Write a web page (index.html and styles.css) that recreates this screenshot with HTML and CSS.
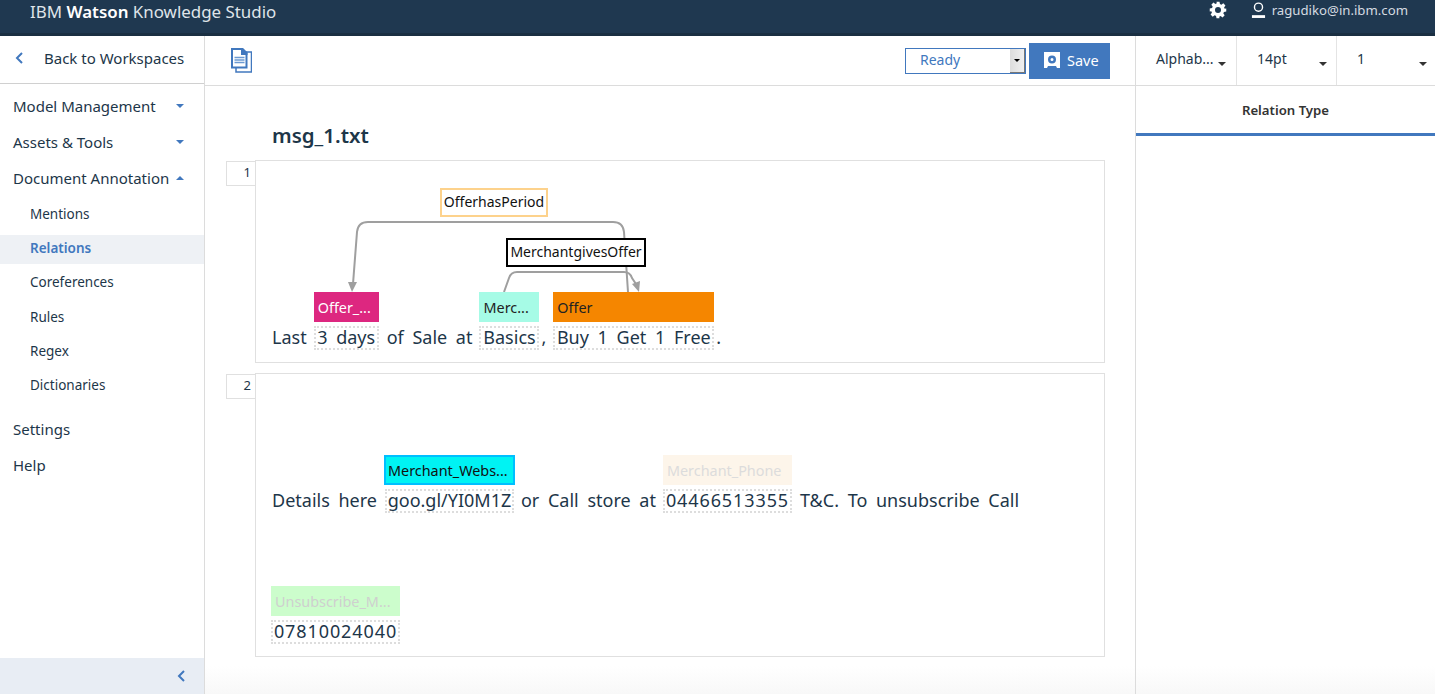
FILE: index.html
```html
<!DOCTYPE html>
<html lang="en">
<head>
  <meta charset="UTF-8" />
  <title>IBM Watson Knowledge Studio</title>
  <link rel="stylesheet" href="styles.css">
</head>
<body>

  <header class="topbar">
    <div class="brand">IBM <b>Watson</b> Knowledge Studio</div>
    <div class="topbar-right">
      <svg class="gear" viewBox="0 0 24 24" width="18" height="18"><path fill="#fff" fill-rule="evenodd" d="M10 1h4l.6 3.100 1.900.8 2.600-1.800 2.800 2.800-1.800 2.600.8 1.900L23 10v4l-3.100.6-.8 1.900 1.800 2.600-2.800 2.800-2.600-1.800-1.900.8L14 23h-4l-.6-3.100-1.900-.8-2.600 1.800-2.800-2.800 1.800-2.600-.8-1.900L1 14v-4l3.100-.6.8-1.900-1.800-2.600 2.800-2.800 2.600 1.800 1.900-.8zM12 8a4 4 0 1 0 0 8 4 4 0 0 0 0-8z"/></svg>
      <svg class="user" viewBox="0 0 16 18" width="15" height="18"><circle cx="8" cy="6" r="4.300" fill="none" stroke="#fff" stroke-width="1.500"/><path fill="#fff" d="M1 14.500h14v3H1z"/></svg>
      <span class="email">ragudiko@in.ibm.com</span>
    </div>
  </header>

  <div class="app">
    <nav class="sidebar">
      <div class="back">
        <svg viewBox="0 0 10 14" width="10" height="14"><path d="M8 2 3 7l5 5" fill="none" stroke="#4178be" stroke-width="2"/></svg>
        <span>Back to Workspaces</span>
      </div>
      <ul class="menu">
        <li class="menu-item">Model Management <i class="caret down"></i></li>
        <li class="menu-item">Assets &amp; Tools <i class="caret down"></i></li>
        <li class="menu-item">Document Annotation <i class="caret up"></i></li>
      </ul>
      <ul class="submenu">
        <li>Mentions</li>
        <li class="active">Relations</li>
        <li>Coreferences</li>
        <li>Rules</li>
        <li>Regex</li>
        <li>Dictionaries</li>
      </ul>
      <ul class="menu menu-last">
        <li class="menu-item">Settings</li>
        <li class="menu-item">Help</li>
      </ul>
      <div class="collapse">
        <svg viewBox="0 0 10 14" width="10" height="14"><path d="M8 2 3 7l5 5" fill="none" stroke="#4178be" stroke-width="2"/></svg>
      </div>
    </nav>

    <main class="main">
      <div class="toolbar">
        <svg class="doc-icon" viewBox="0 0 21 25" width="21" height="25">
          <path d="M5 4h15.500v20H5z" fill="#fff" stroke="#4178be" stroke-width="1.500"/>
          <path d="M1 1h10l4.500 4.500V19.500H1z" fill="#fff" stroke="#4178be" stroke-width="2"/>
          <path d="M10 0h2l4.500 4.500V7H10z" fill="#4178be"/>
          <path d="M3.500 9.500h10M3.500 12h10M3.500 14.500h10" stroke="#6c9ad2" stroke-width="1.500"/>
        </svg>
        <div class="status">
          <span>Ready</span>
          <span class="status-arrow"><i></i></span>
        </div>
        <button class="save" type="button">
          <svg viewBox="0 0 16 16" width="16" height="16"><path fill="#fff" fill-rule="evenodd" d="M0 0h16v16h-3l-1-2H4l-1 2H0zM8 3.500a4 4 0 1 0 0 8 4 4 0 0 0 0-8zM8 6a1.500 1.500 0 1 1 0 3 1.500 1.500 0 0 1 0-3z"/></svg>
          Save
        </button>
      </div>

      <div class="doc">
        <h2 class="doc-title">msg_1.txt</h2>

        <div class="sentence">
          <div class="gutter">1</div>
          <div class="card card-one">
            <svg class="arcs" viewBox="255 160 850 203" width="850" height="203">
              <path class="arc" d="M628 292 624 232Q623 222 613 222H368Q358 222 357 232L353 284"/>
              <path class="arc-head" d="M352 292 348 282H357z"/>
              <path class="arc" d="M504 292 509 278Q511 272 517 272H624Q630 272 632 278L636 284"/>
              <path class="arc-head" d="M639 292 632 284 640 281z"/>
            </svg>
            <span class="rel rel-period">OfferhasPeriod</span>
            <span class="rel rel-gives">MerchantgivesOffer</span>
            <div class="line">
              <span>Last</span>
              <span class="token w-days"><span class="tag tag-period">Offer_...</span>3 days</span>
              <span class="nudge">of Sale at</span>
              <span class="token w-basics"><span class="tag tag-merchant">Merc...</span>Basics</span>
              <span class="comma">,</span>
              <span class="token w-offer"><span class="tag tag-offer">Offer</span>Buy 1 Get 1 Free</span>
              <span class="dot">.</span>
            </div>
          </div>
        </div>

        <div class="sentence">
          <div class="gutter">2</div>
          <div class="card card-two">
            <div class="line">
              <span>Details here</span>
              <span class="token w-url nudge"><span class="tag tag-site">Merchant_Webs...</span>goo.gl/YI0M1Z</span>
              <span>or Call store at</span>
              <span class="token w-phone num"><span class="tag tag-phone">Merchant_Phone</span>04466513355</span>
              <span class="nudge">T&amp;C. To unsubscribe Call</span>
            </div>
            <div class="line line-wrap">
              <span class="token w-phone num"><span class="tag tag-unsub">Unsubscribe_M...</span>07810024040</span>
            </div>
          </div>
        </div>
      </div>
    </main>

    <aside class="panel">
      <div class="panel-tools">
        <div class="tool tool-sort">Alphab... <i class="caret dark"></i></div>
        <div class="tool tool-size">14pt <i class="caret dark"></i></div>
        <div class="tool tool-page">1 <i class="caret dark"></i></div>
      </div>
      <div class="panel-tab">Relation Type</div>
    </aside>
  </div>

</body>
</html>
```

FILE: styles.css
```css
* {
  box-sizing: border-box;
}
body {
  margin: 0;
  height: 694px;
  overflow: hidden;
  font-family: "Noto Sans", Arial, sans-serif;
  color: #1d3649;
  background-color: #fff;
}
ul {
  list-style: none;
  margin: 0;
  padding: 0;
}
.topbar {
  height: 36px;
  background-color: #1f3850;
  border-bottom: 3px solid #1a2f42;
  color: #fff;
  display: flex;
  justify-content: space-between;
  padding: 0 27px 0 30px;
}
.brand {
  font-size: 16.9px;
  line-height: 23px;
  color: #dfe4e9;
}
.brand b {
  color: #fff;
  font-weight: 600;
}
.topbar-right {
  display: flex;
  align-items: flex-start;
  padding-top: 1px;
}
.gear {
  margin-right: 24px;
}
.user {
  margin-right: 6px;
}
.email {
  font-size: 13.2px;
  line-height: 18px;
  color: #d5dbe1;
}
.app {
  display: flex;
  height: 658px;
}
.sidebar {
  width: 205px;
  border-right: 1px solid #dcdcdc;
  display: flex;
  flex-direction: column;
  position: relative;
}
.back {
  height: 48px;
  border-bottom: 1px solid #d0d0d0;
  display: flex;
  align-items: center;
  padding: 0 0 3px 14px;
  font-size: 15px;
}
.back span {
  margin-left: 20px;
}
.menu {
  padding-top: 4px;
}
.menu-item {
  height: 36px;
  line-height: 36px;
  padding-left: 13px;
  font-size: 15px;
  position: relative;
}
.caret {
  display: inline-block;
  width: 0;
  height: 0;
  border-left: 4px solid transparent;
  border-right: 4px solid transparent;
}
.caret.down {
  border-top: 4px solid #4178be;
}
.caret.up {
  border-bottom: 4px solid #4178be;
}
.caret.dark {
  border-top: 4px solid #333;
}
.menu-item .caret {
  position: absolute;
  right: 20px;
  top: 16px;
}
.submenu {
  padding: 5px 0 5px;
}
.submenu li {
  height: 29px;
  margin-bottom: 5.2px;
  line-height: 27px;
  padding-left: 30px;
  font-size: 13.5px;
}
.submenu li.active {
  background-color: #eef1f5;
  color: #4178be;
  font-weight: 600;
}
.menu-last {
  padding-top: 0;
}
.collapse {
  margin-top: auto;
  height: 36px;
  background-color: #e8edf4;
  display: flex;
  align-items: center;
  justify-content: flex-end;
  padding-right: 18px;
}
.main {
  width: 931px;
  border-right: 1px solid #dcdcdc;
  background: linear-gradient(#fff 630px, #f8f8f8);
}
.toolbar {
  height: 50px;
  border-bottom: 1px solid #dcdcdc;
  display: flex;
  align-items: center;
  padding: 0 25px 0 26px;
  background-color: #fff;
}
.doc-icon {
  margin-right: auto;
}
.status {
  width: 121px;
  height: 26px;
  border: 1px solid #4178be;
  display: flex;
  justify-content: space-between;
  color: #4178be;
  font-size: 14px;
  line-height: 22px;
  padding-left: 14px;
  margin-right: 3px;
}
.status-arrow {
  width: 15px;
  background: linear-gradient(90deg, #ddd, #f0f0f0);
  border-right: 1px solid #777;
  border-bottom: 1px solid #777;
  display: flex;
  align-items: center;
  justify-content: center;
}
.status-arrow i {
  width: 0;
  height: 0;
  border-left: 3px solid transparent;
  border-right: 3px solid transparent;
  border-top: 3px solid #000;
}
.save {
  width: 81px;
  height: 36px;
  background-color: #4178be;
  border: none;
  color: #fff;
  font-family: inherit;
  font-size: 14.5px;
  display: flex;
  align-items: center;
  gap: 7px;
  padding: 0 0 2px 15px;
}
.doc {
  padding: 35px 0 0 21px;
}
.doc-title {
  margin: 0 0 11px 46px;
  font-size: 20.5px;
  line-height: 28px;
  font-weight: 600;
}
.sentence {
  display: flex;
  align-items: flex-start;
  margin-bottom: 10px;
}
.gutter {
  width: 29px;
  height: 25px;
  margin-top: 1px;
  border: 1px solid #e0e0e0;
  border-right: none;
  text-align: right;
  padding-right: 4px;
  font-size: 13px;
  line-height: 21px;
}
.card {
  width: 850px;
  border: 1px solid #e0e0e0;
  padding-left: 16px;
  position: relative;
}
.card-one {
  height: 203px;
  padding-top: 165px;
}
.card-two {
  height: 284px;
  padding-top: 115px;
}
.line {
  display: flex;
  align-items: flex-start;
  font-size: 18px;
  line-height: 22px;
  word-spacing: 4px;
  white-space: nowrap;
  gap: 7px;
}
.line-wrap {
  margin-top: 107px;
  margin-left: -1px;
}
.nudge {
  margin-left: 1px;
}
.comma {
  margin: 0 0 0 -5px;
}
.dot {
  margin-left: -5px;
}
.token {
  border: 2px dotted #dddddd;
  height: 24px;
  display: block;
  position: relative;
  text-align: center;
  line-height: 18px;
}
.num {
  letter-spacing: 0.9px;
}
.w-days { width: 65px; }
.w-basics { width: 60px; }
.w-offer { width: 161px; }
.w-url { width: 129px; }
.w-phone { width: 129px; }
.tag {
  position: absolute;
  left: -2px;
  right: -2px;
  bottom: 26px;
  height: 30px;
  line-height: 31px;
  font-size: 14.4px;
  letter-spacing: 0;
  padding: 0 4px;
  text-align: left;
  word-spacing: 0;
}
.tag-period { background-color: #dd2780; color: #fff; }
.tag-merchant { background-color: #a6fbe6; color: #222; }
.tag-offer { background-color: #f58600; color: #222; }
.tag-site {
  left: -3px;
  right: -3px;
  background-color: #00f3f3;
  color: #111;
  border: 2px solid #00bfff;
  line-height: 27px;
  padding: 0 2px;
}
.tag-phone { background-color: #fdf5ea; color: #dcdcdc; }
.tag-unsub { background-color: #ccfdcc; color: #cfcfcf; }
.arcs {
  position: absolute;
  left: -1px;
  top: -1px;
}
.arc {
  fill: none;
  stroke: #9f9f9f;
  stroke-width: 2;
}
.arc-head {
  fill: #9f9f9f;
}
.rel {
  position: absolute;
  background-color: #fff;
  border: 2px solid #000;
  height: 29px;
  line-height: 24px;
  font-size: 14px;
  text-align: center;
  color: #111;
}
.rel-period {
  left: 184px;
  top: 27px;
  width: 108px;
  border-color: #fdd28c;
}
.rel-gives {
  left: 250px;
  top: 77px;
  width: 140px;
}
.panel {
  flex: 1;
  background: linear-gradient(#fff 630px, #f8f8f8);
}
.panel-tools {
  height: 50px;
  border-bottom: 1px solid #dcdcdc;
  display: flex;
}
.tool {
  font-size: 14px;
  line-height: 46px;
  position: relative;
  border-right: 1px solid #e4e4e4;
}
.tool .caret {
  position: absolute;
  top: 26px;
}
.tool-sort {
  width: 101px;
  padding-left: 20px;
}
.tool-size {
  width: 100px;
  padding-left: 20px;
}
.tool-page {
  flex: 1;
  padding-left: 20px;
  border-right: none;
}
.tool-sort .caret,
.tool-size .caret,
.tool-page .caret {
  left: 82px;
}
.panel-tab {
  height: 50px;
  border-bottom: 3px solid #4178be;
  text-align: center;
  font-size: 13.2px;
  font-weight: 600;
  line-height: 48px;
  color: #333;
}
```
